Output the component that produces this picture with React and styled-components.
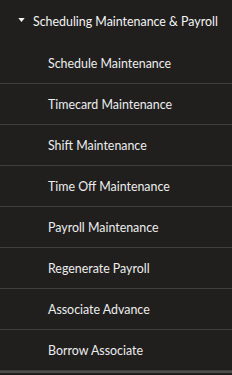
import styled, { createGlobalStyle } from 'styled-components'

const GlobalStyle = createGlobalStyle`
  html, body {
    margin: 0;
    padding: 0;
    background: #201f1e;
  }
  body {
    font-family: Lato, 'Noto Sans', sans-serif;
    -webkit-font-smoothing: antialiased;
  }
`

const items = [
  'Schedule Maintenance',
  'Timecard Maintenance',
  'Shift Maintenance',
  'Time Off Maintenance',
  'Payroll Maintenance',
  'Regenerate Payroll',
  'Associate Advance',
  'Borrow Associate',
]

function App() {
  return (
    <>
      <GlobalStyle />
      <Panel>
        <GroupHeader>
          <Caret viewBox='0 0 8 5' aria-hidden='true'>
            <path d='M0 0h8L4 5z' fill='#f2f2f2' />
          </Caret>
          Scheduling Maintenance &amp; Payroll
        </GroupHeader>
        <ItemList>
          {items.map((item) => (
            <Item key={item}>{item}</Item>
          ))}
        </ItemList>
      </Panel>
    </>
  )
}

export default App

const Panel = styled.nav`
  width: 232px;
  min-height: 375px;
  background: #201f1e;
  color: #f2f2f2;
`

const GroupHeader = styled.div`
  display: flex;
  align-items: center;
  height: 42px;
  padding-left: 18px;
  padding-bottom: 1px;
  font-size: 12.4px;
  color: #f4f4f4;
  white-space: nowrap;
`

const Caret = styled.svg`
  flex-shrink: 0;
  width: 7px;
  height: 4px;
  margin-right: 8px;
  margin-top: -2px;
`

const ItemList = styled.ul`
  list-style: none;
  margin: 0;
  padding: 0;
`

const Item = styled.li`
  display: flex;
  align-items: center;
  height: 40px;
  padding-left: 48px;
  font-size: 12.4px;
  color: #ededed;
  border-bottom: 1px solid #403f3e;
  white-space: nowrap;

  &:last-child {
    box-shadow: 0 2px 0 #4e4d4c;
  }
`
